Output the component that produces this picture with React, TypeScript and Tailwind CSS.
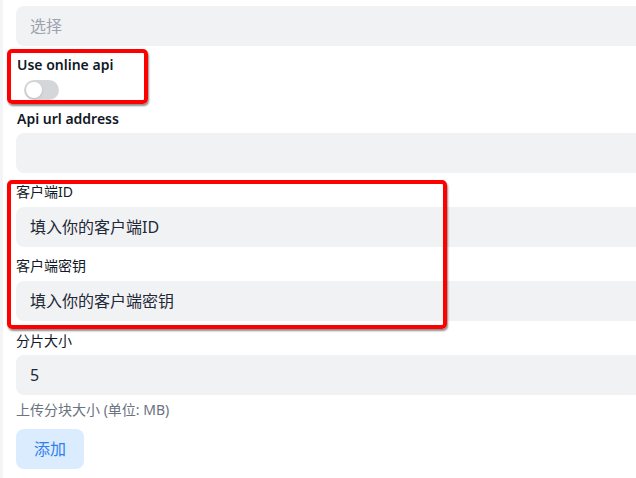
import { useState } from 'react';

const font = { fontFamily: '"Noto Sans", "Noto Sans CJK SC", sans-serif' };

function Field({ value, placeholder }: { value?: string; placeholder?: string }) {
  return (
    <div className="h-10 w-[680px] rounded-lg bg-[#f1f2f4] pl-[14px] flex items-center text-base">
      {value ? (
        <span className="text-[#1f2937]">{value}</span>
      ) : (
        <span className="text-[#9ca3af]">{placeholder}</span>
      )}
    </div>
  );
}

export default function App() {
  const [online, setOnline] = useState(false);

  return (
    <div
      className="relative w-[636px] h-[478px] overflow-hidden bg-white border-l-[3px] border-[#f3f4f6] pl-[13px]"
      style={font}
    >
      {/* form */}
      <div className="flex flex-col items-start">
        <div className="mt-[6px]">
          <Field placeholder="选择" />
        </div>

        <div className="mt-[9px] h-5 text-sm leading-5 font-semibold text-[#111827] pl-px">Use online api</div>
        <button
          onClick={() => setOnline(!online)}
          className={`mt-[5px] ml-2 h-5 w-[35px] rounded-full p-[2px] flex ${online ? 'bg-blue-500 justify-end' : 'bg-[#d4d6da] justify-start'}`}
        >
          <span className="h-4 w-4 rounded-full bg-white shadow-sm" />
        </button>

        <div className="mt-[9px] h-5 text-sm leading-5 font-semibold text-[#111827] pl-px">Api url address</div>
        <div className="mt-1">
          <Field placeholder="" />
        </div>

        <div className="mt-[9px] h-5 text-sm leading-5 text-[#111827]">客户端ID</div>
        <div className="mt-[5px]">
          <Field value="填入你的客户端ID" />
        </div>

        <div className="mt-[9px] h-5 text-sm leading-5 text-[#111827]">客户端密钥</div>
        <div className="mt-[5px]">
          <Field value="填入你的客户端密钥" />
        </div>

        <div className="mt-[10px] h-5 text-sm leading-5 text-[#111827]">分片大小</div>
        <div className="mt-1">
          <Field value="5" />
        </div>
        <div className="mt-[5px] h-5 text-sm leading-5 text-[#6b7280]">上传分块大小 (单位: MB)</div>

        <button className="mt-[9px] h-10 w-[68px] rounded-lg bg-[#dcecff] text-base text-[#2f80ed]">添加</button>
      </div>

      {/* annotation boxes drawn over the form */}
      <div className="pointer-events-none absolute left-[4px] top-[49px] w-[141px] h-[55px] rounded-[5px] border-4 border-[#ff0000] shadow-[1px_2px_2px_rgba(0,0,0,0.45)]" />
      <div className="pointer-events-none absolute left-[4px] top-[180px] w-[440px] h-[149px] rounded-[5px] border-4 border-[#ff0000] shadow-[1px_2px_2px_rgba(0,0,0,0.45)]" />
    </div>
  );
}
